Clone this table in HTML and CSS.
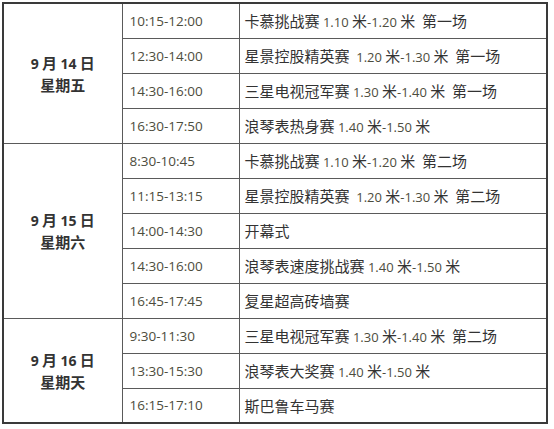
FILE: index.html
```html
<!DOCTYPE html>
<html lang="zh">
<head>
<meta charset="utf-8">
<link rel="stylesheet" href="styles.css">
</head>
<body>
<table class="schedule">
  <colgroup>
    <col class="c-day"><col class="c-time"><col class="c-event">
  </colgroup>
  <tbody>
    <tr>
      <td class="day" rowspan="4"><span class="n">9</span> 月 <span class="n">14</span> 日<br>星期五</td>
      <td class="time">10:15-12:00</td>
      <td class="event">卡慕挑战赛 <span class="n">1.10</span> 米<span class="n">-1.20</span> 米 &nbsp;第一场</td>
    </tr>
    <tr>
      <td class="time">12:30-14:00</td>
      <td class="event">星景控股精英赛 &nbsp;<span class="n">1.20</span> 米<span class="n">-1.30</span> 米 &nbsp;第一场</td>
    </tr>
    <tr>
      <td class="time">14:30-16:00</td>
      <td class="event">三星电视冠军赛 <span class="n">1.30</span> 米<span class="n">-1.40</span> 米 &nbsp;第一场</td>
    </tr>
    <tr>
      <td class="time">16:30-17:50</td>
      <td class="event">浪琴表热身赛 <span class="n">1.40</span> 米<span class="n">-1.50</span> 米</td>
    </tr>
    <tr>
      <td class="day" rowspan="5"><span class="n">9</span> 月 <span class="n">15</span> 日<br>星期六</td>
      <td class="time">8:30-10:45</td>
      <td class="event">卡慕挑战赛 <span class="n">1.10</span> 米<span class="n">-1.20</span> 米 &nbsp;第二场</td>
    </tr>
    <tr>
      <td class="time">11:15-13:15</td>
      <td class="event">星景控股精英赛 &nbsp;<span class="n">1.20</span> 米<span class="n">-1.30</span> 米 &nbsp;第二场</td>
    </tr>
    <tr>
      <td class="time">14:00-14:30</td>
      <td class="event">开幕式</td>
    </tr>
    <tr>
      <td class="time">14:30-16:00</td>
      <td class="event">浪琴表速度挑战赛 <span class="n">1.40</span> 米<span class="n">-1.50</span> 米</td>
    </tr>
    <tr>
      <td class="time">16:45-17:45</td>
      <td class="event">复星超高砖墙赛</td>
    </tr>
    <tr>
      <td class="day" rowspan="3"><span class="n">9</span> 月 <span class="n">16</span> 日<br>星期天</td>
      <td class="time">9:30-11:30</td>
      <td class="event">三星电视冠军赛 <span class="n">1.30</span> 米<span class="n">-1.40</span> 米 &nbsp;第二场</td>
    </tr>
    <tr>
      <td class="time">13:30-15:30</td>
      <td class="event">浪琴表大奖赛 <span class="n">1.40</span> 米<span class="n">-1.50</span> 米</td>
    </tr>
    <tr>
      <td class="time">16:15-17:10</td>
      <td class="event">斯巴鲁车马赛</td>
    </tr>
  </tbody>
</table>
</body>
</html>
```
FILE: styles.css
```css
html, body {
  margin: 0;
  padding: 0;
  background: #fff;
}
body {
  padding: 2px 0 0 2px;
  font-family: "Noto Sans CJK SC", "Noto Sans", sans-serif;
  color: #333;
}
.schedule {
  border-collapse: collapse;
  width: 546px;
  table-layout: fixed;
  border: 2px solid #3a3a3a;
}
.c-day { width: 119px; }
.c-time { width: 117px; }
.schedule td {
  border: 1px solid #5a5a5a;
  height: 35px;
  padding: 0;
  box-sizing: border-box;
  vertical-align: middle;
  white-space: nowrap;
}
.day {
  text-align: center;
  font-weight: bold;
  font-size: 15px;
  line-height: 21px;
  color: #333;
}
.day .n {
  font-family: "Open Sans", "Liberation Sans", sans-serif;
  font-size: 14px;
}
.time {
  padding-left: 7px !important;
  font-family: "Open Sans", "Liberation Sans", sans-serif;
  font-size: 13.5px;
  color: #4d4d3d;
}
.event {
  padding-left: 5px !important;
  font-size: 15px;
  color: #333;
}
.event .n {
  font-family: "Open Sans", "Liberation Sans", sans-serif;
  font-size: 13px;
  color: #4d4d3d;
}
```
